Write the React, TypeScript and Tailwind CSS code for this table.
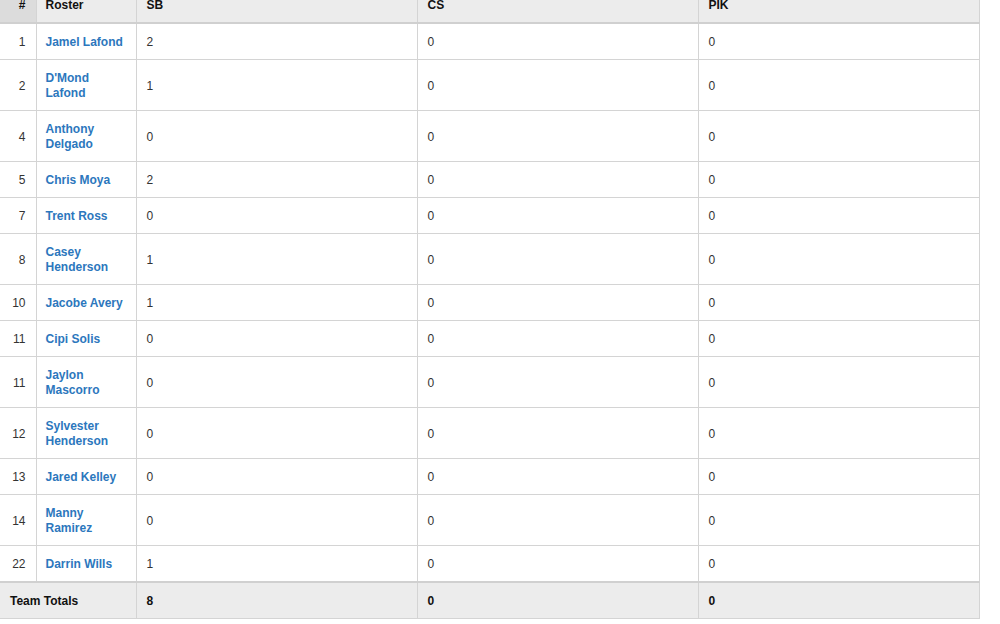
const rows: [string, string, string][] = [
  ["1", "Jamel Lafond", "2"],
  ["2", "D'Mond Lafond", "1"],
  ["4", "Anthony Delgado", "0"],
  ["5", "Chris Moya", "2"],
  ["7", "Trent Ross", "0"],
  ["8", "Casey Henderson", "1"],
  ["10", "Jacobe Avery", "1"],
  ["11", "Cipi Solis", "0"],
  ["11", "Jaylon Mascorro", "0"],
  ["12", "Sylvester Henderson", "0"],
  ["13", "Jared Kelley", "0"],
  ["14", "Manny Ramirez", "0"],
  ["22", "Darrin Wills", "1"],
];

export default function App() {
  return (
    <div className="h-[624px] w-[1000px] overflow-hidden bg-white font-['Liberation_Sans',Arial,sans-serif] text-[12px] leading-[15px] text-[#333]">
      <table className="mt-[-14px] w-[980px] table-fixed border-collapse border-y border-r border-[#d4d4d4]">
        <colgroup>
          <col className="w-[36px]" />
          <col className="w-[100px]" />
          <col className="w-[281px]" />
          <col className="w-[281px]" />
          <col />
        </colgroup>
        <thead>
          <tr className="border-b-2 border-[#d0d0d0] bg-[#ececec] font-bold text-[#111]">
            <th className="border-r border-[#d4d4d4] bg-[#dcdcdc] pt-[11px] pb-[9px] pr-[10px] pl-1 text-right">#</th>
            <th className="border-r border-[#d4d4d4] pt-[11px] pb-[9px] pl-[9px] pr-[10px] text-left">Roster</th>
            <th className="border-r border-[#d4d4d4] px-[10px] pt-[11px] pb-[9px] text-left">SB</th>
            <th className="border-r border-[#d4d4d4] px-[10px] pt-[11px] pb-[9px] text-left">CS</th>
            <th className="px-[10px] pt-[11px] pb-[9px] text-left">PIK</th>
          </tr>
        </thead>
        <tbody>
          {rows.map(([num, name, sb], i) => (
            <tr key={i} className="border-b border-[#d4d4d4]">
              <td className="border-r border-[#d4d4d4] pt-[11px] pb-[9px] pr-[10px] pl-1 text-right">{num}</td>
              <td className="border-r border-[#d4d4d4] pt-[11px] pb-[9px] pl-[9px] pr-[10px] font-bold text-[#2c77bd]">{name}</td>
              <td className="border-r border-[#d4d4d4] px-[10px] pt-[11px] pb-[9px]">{sb}</td>
              <td className="border-r border-[#d4d4d4] px-[10px] pt-[11px] pb-[9px]">0</td>
              <td className="px-[10px] pt-[11px] pb-[9px]">0</td>
            </tr>
          ))}
        </tbody>
        <tfoot>
          <tr className="border-t-2 border-[#d0d0d0] bg-[#ececec] font-bold text-[#111]">
            <td colSpan={2} className="border-r border-[#d4d4d4] px-[10px] pt-[11px] pb-[9px]">Team Totals</td>
            <td className="border-r border-[#d4d4d4] px-[10px] pt-[11px] pb-[9px]">8</td>
            <td className="border-r border-[#d4d4d4] px-[10px] pt-[11px] pb-[9px]">0</td>
            <td className="px-[10px] pt-[11px] pb-[9px]">0</td>
          </tr>
        </tfoot>
      </table>
    </div>
  );
}
